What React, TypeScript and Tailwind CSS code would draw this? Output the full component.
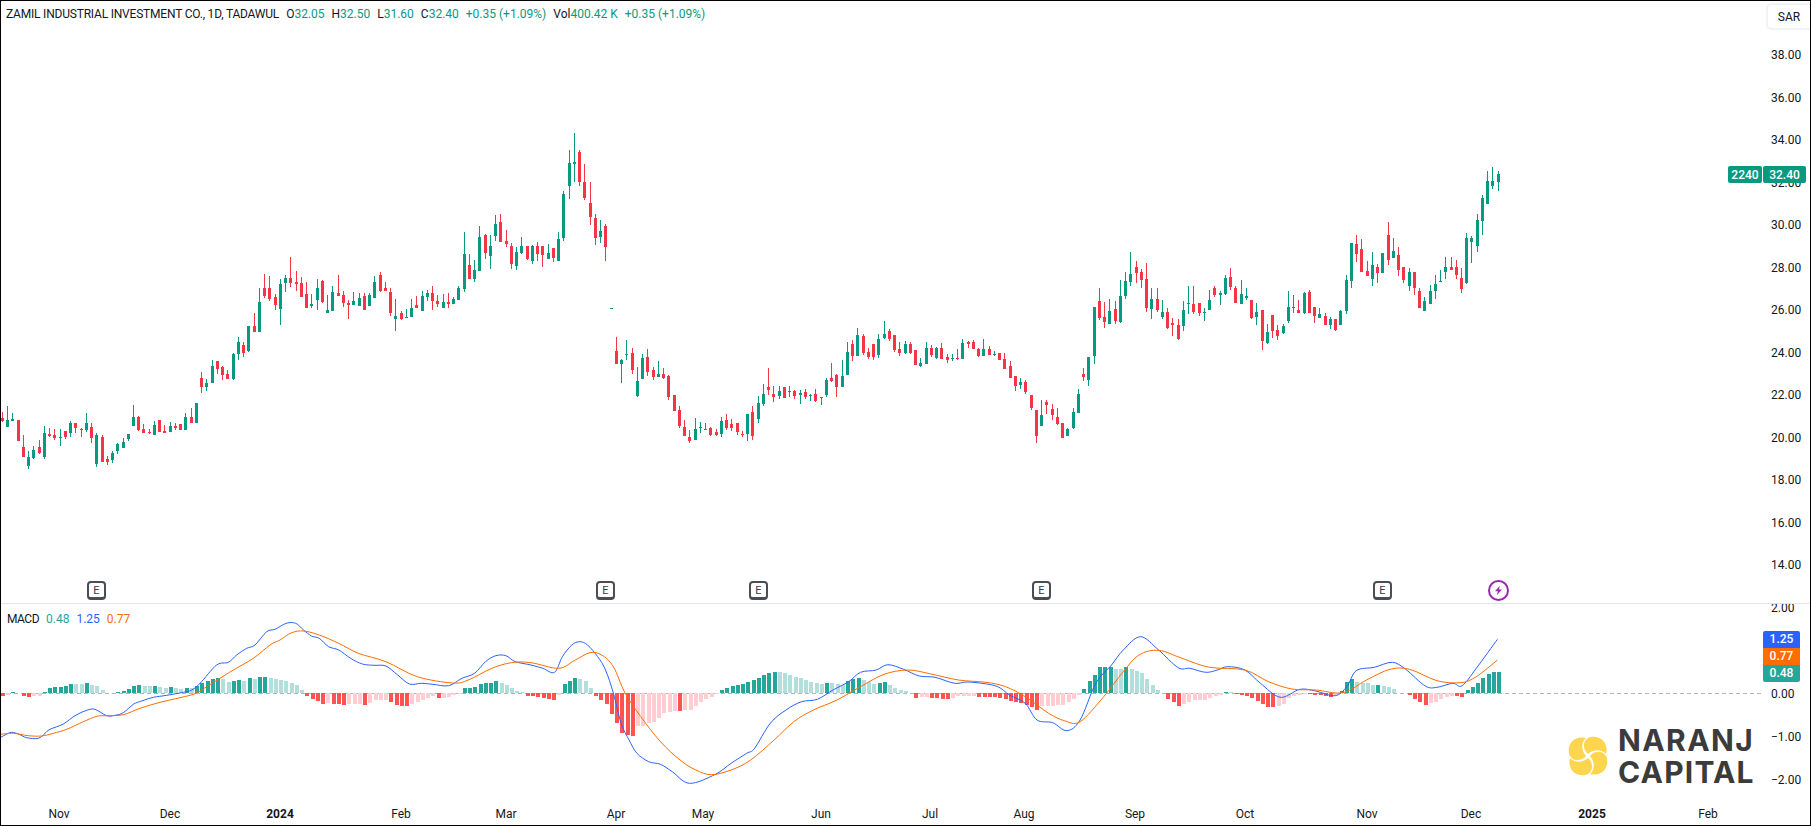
// TradingView style chart snapshot: candles + MACD pane
type Candle = { up: boolean; x: number; hi: number; top: number; bot: number; lo: number };

// each row was read off at 3x: colour+x,high,bodyTop,bodyBottom,low
function parseSeg(bx: number, by: number, rows: string): Candle[] {
  return rows.trim().split(/\s+/).map((r) => {
    const [x, hi, top, bot, lo] = r.slice(1).split(",").map(Number);
    const p = (v: number) => by + Math.round(v / 3);
    return { up: r[0] === "g", x: bx + Math.floor(x / 3), hi: p(hi), top: p(top), bot: p(bot), lo: p(lo) };
  });
}

const candles: Candle[] = [
  ...parseSeg(0, 380, `r7,96,114,123,126 g22,78,120,141,141 g37,99,117,123,123 r55,120,120,183,183 r70,165,201,231,231
    g85,213,231,258,267 g100,198,210,234,237 r118,180,201,219,222 g133,138,159,231,237 r148,144,162,168,171
    r163,147,165,174,180 g181,147,171,174,198 r196,153,153,171,177 g211,123,129,159,171 r226,129,129,144,159
    r244,144,147,150,171 g259,99,129,150,156 r274,129,141,174,189 g289,159,165,252,261 r307,165,171,246,246
    r322,228,237,246,255 g337,213,219,240,249 g352,189,192,213,222 g370,174,186,204,204 g385,162,162,177,183
    g400,75,111,138,138 r415,108,111,150,153 r430,132,147,159,159 r448,147,156,159,162 g463,123,135,165,165
    r478,120,120,156,156 r493,135,153,159,159 g511,126,138,156,156 r526,129,138,144,150 r541,132,132,150,150
    g556,99,111,150,150 r574,84,111,129,129 g589,69,69,129,129`),
  ...parseSeg(190, 250, `r34,366,384,411,429 g49,387,399,411,423 g67,330,348,399,399 r82,333,333,357,372 r97,348,351,375,390
    r112,360,372,387,387 g130,309,312,387,390 g145,261,276,312,330 r160,276,285,309,321 g175,228,228,303,306
    r193,189,228,246,246 g208,114,156,246,246 r223,72,114,138,144 r238,78,114,147,153 r256,132,141,165,180
    g271,87,102,177,225 g286,75,84,99,126 r301,21,84,99,111 r319,63,96,102,123 r334,81,99,141,141 r349,96,132,174,174`),
  ...parseSeg(300, 200, `g34,282,312,318,324 g52,237,264,300,330 r67,240,243,306,309 g82,285,330,339,339 g97,258,276,333,333
    r115,225,279,288,288 r130,273,285,309,321 r145,300,309,315,357 g160,276,303,315,315 g178,279,294,318,318
    r193,279,288,330,330 g208,279,285,318,318 g223,228,246,294,294 r241,216,225,273,276 r256,246,264,273,273
    r271,264,276,339,348 g286,297,348,357,393 r304,333,339,357,360 g319,327,351,354,354 g334,297,324,351,351
    r349,288,315,324,324 g367,273,288,333,333 g382,270,279,291,303 r397,258,279,303,330 r412,285,303,312,321
    g430,282,306,324,324 r445,279,306,312,324 g460,291,297,312,312 g475,258,264,300,300 g493,96,162,267,276
    r508,162,195,237,237 g523,180,210,237,246 g538,78,111,213,213 r556,102,105,159,177 g571,105,138,168,207
    g586,45,72,108,123 r601,42,66,126,126 r619,90,123,132,141 r634,129,138,192,207 g649,141,156,198,210
    g664,111,138,159,162 r682,138,138,177,180 g697,135,138,183,192 r712,126,138,162,183 r727,138,138,165,201
    g745,132,159,177,177 r760,144,144,174,186 g775,96,117,183,183`),
  ...parseSeg(540, 120, `g70,213,222,354,363 g88,90,129,198,237 g103,39,126,132,186 r118,90,96,186,198 r133,132,186,234,240
    r151,186,249,291,315 r166,282,294,354,375 g181,300,333,351,369 r196,312,318,381,423`),
  // lone print inside the gap
  ...parseSeg(300, 200, `g934,325,324,327,327`),
  ...parseSeg(600, 310, `r49,81,123,162,162 g64,147,150,162,219 g79,90,132,135,150 r97,114,129,180,192 g112,171,213,258,261
    g127,132,144,207,207 r142,117,141,186,198 r160,171,180,201,210 g175,153,192,201,201 r190,174,192,204,207
    r205,195,198,261,270 r223,255,255,303,303 r238,288,300,348,354 r253,330,351,378,378 r268,360,381,393,399
    g286,324,357,390,390 g301,336,351,354,369 g316,339,358,360,360 r331,351,354,375,378 r349,357,366,375,378
    g364,321,333,372,381 r379,312,330,354,360 r394,327,342,354,363 r412,339,339,366,375 r427,363,372,375,381
    g442,312,312,372,393 r457,288,306,378,390 g475,258,279,327,339 g490,222,252,282,288 r505,174,231,240,255
    r520,228,252,261,276 g538,228,243,258,267 r553,231,231,264,264 g568,228,243,246,261 r583,240,243,258,267
    g601,240,249,255,282 r616,237,246,261,267 g631,252,255,258,273 r646,237,252,273,276 r664,261,261,264,285
    g679,204,210,255,261 r694,159,204,213,216 r709,192,195,231,261 g727,150,198,231,231 g742,96,126,195,195
    r757,90,102,138,153 g772,54,75,138,138 r790,72,78,129,135 r805,114,126,141,147 r820,102,102,141,150
    g835,72,87,135,144 g853,33,72,84,87 r868,57,63,87,93 r883,75,75,120,126 r898,96,117,129,138
    g916,93,102,129,132 r931,96,102,129,132 r946,120,120,165,165 g961,144,159,168,171`),
  ...parseSeg(920, 240, `g19,306,324,372,372 r34,315,324,345,351 g49,321,324,354,357 r64,309,324,357,357 r82,342,351,360,369
    g97,342,354,357,363 r112,327,354,357,360 g127,297,309,357,357 r145,303,306,312,324 r160,300,306,327,327
    r175,324,327,348,351 g190,297,327,348,348 r208,318,327,345,345 g223,333,342,345,348 r238,339,339,360,360
    r253,339,357,387,387 r271,363,378,414,414 r286,408,408,438,453 g301,414,426,435,447 r316,420,426,456,462
    r334,465,465,504,510 r349,510,510,588,609 g364,480,525,558,558 r379,480,486,495,522 r397,492,507,525,540
    r412,504,531,552,555 r427,549,549,594,594 g442,564,567,588,588 g460,504,516,564,567 g475,447,462,519,519
    r490,384,402,411,423 g505,351,351,420,438 g523,201,201,348,372 r538,144,183,234,240 r553,186,231,246,264
    g568,177,213,252,252 r586,183,207,243,252 g601,120,168,246,249 g616,96,123,168,177 g631,36,102,126,138
    r649,63,81,99,129 r664,87,96,120,144 r679,69,117,204,216 g694,144,177,207,237 r712,144,177,210,216
    g727,180,216,231,237 r742,204,216,264,267 r757,234,249,255,288 r775,237,255,297,300 g790,183,210,258,273
    g805,138,189,192,222 r820,138,192,216,222 r838,189,189,219,228 g853,204,216,219,243 g868,150,180,210,210
    r883,138,144,165,171 g901,153,159,165,195 g916,105,114,162,165 r931,84,111,141,150 r946,138,144,189,189`),
  ...parseSeg(1220, 150, `g64,390,432,462,462 g79,414,438,444,450 r94,450,450,504,507 g109,459,486,501,525 r127,480,480,573,600
    g142,522,546,579,582 r157,495,495,543,564 r172,525,540,558,570 g190,522,528,549,552 g205,423,471,513,519
    g220,435,471,474,489 r235,450,480,489,489 g253,426,429,489,492 r268,420,426,489,489 r283,471,471,498,519
    g298,474,492,504,504 r316,489,498,525,525 g331,501,507,525,537 r346,507,507,540,543 g361,480,483,525,525
    g379,375,390,483,492 g394,279,279,393,414 r409,255,282,312,336 r424,267,297,366,366 r442,333,363,378,378
    g457,306,345,387,408 r472,342,351,369,399 g487,309,309,369,369 r505,216,255,330,345 g520,264,303,324,324
    r535,291,315,360,378 r550,351,351,390,399 g568,354,366,408,423 r583,366,366,414,435 r598,414,423,474,474
    g613,441,453,483,483 g631,405,423,462,462 g646,375,402,423,447 g661,360,393,396,396 g676,321,351,366,387
    r694,321,351,360,360 r709,330,351,375,387 r724,354,384,417,429 g739,249,264,399,402 g754,258,264,276,339
    g772,192,210,288,306 g787,135,144,213,255 g802,63,93,162,162 g817,51,93,108,117 g835,63,72,96,123`),
];

// histogram heights in px above the zero line, one per bar
const hist = [
  -3, -2, 1.5, -0.3, -3, -4, -3, -2.5, 1.5, 5,
  6, 6.5, 6.6, 9.5, 9.4, 9.3, 10.5, 8, 7, 3.5,
  0.3, 0.3, 1.5, 2.5, 4.5, 7.5, 7.6, 7.5, 7, 7.5,
  6.5, 5.5, 5.6, 5, 4.5, 5.5, 5.4, 7.5, 10, 12.5,
  14.5, 15, 14, 11.5, 12.5, 13.5, 12, 15, 14, 16,
  16.5, 15.5, 14, 13.5, 12.5, 10, 8.5, 3, -3, -6,
  -8, -10.5, -10, -10.5, -11, -11.5, -11.4, -11, -10.9, -11.5,
  -10, -7, -7, -7, -9, -11.5, -13, -13.1, -11, -9,
  -7, -5, -3, -5, -4.5, -4, -2, -0.5, 5, 5.2,
  6.5, 9.5, 9.6, 10.5, 12.5, 10.5, 8.5, 5, 2, 1,
  -3, -3.1, -4, -5, -5.5, -6.5, -2, 9, 12, 15.5,
  14, 12, 5.5, -3, -7, -11, -21, -30, -40, -42,
  -42.5, -33, -32.5, -30, -29, -24.5, -20, -19, -18, -18.2,
  -17, -16.5, -13, -9, -6, -3.5, -1, 3.5, 5, 7,
  8.5, 8.6, 11, 13, 15, 18, 20.5, 21, 20.9, 20,
  18, 16.5, 15, 13.5, 11.5, 10, 9.5, 10.5, 10, 9.5,
  8.5, 12.5, 14, 15.5, 13, 11, 9.5, 10, 11, 8.5,
  5, 3.5, 2.5, 0.3, -5, -4, -4, -4.5, -4.6, -5.5,
  -5.6, -5, -3, -3, -3, -3, -3.5, -4, -4.1, -4.2,
  -5, -6, -7.5, -9, -10, -12, -14, -17, -13, -13,
  -12.5, -12.4, -12, -9, -5.5, -2, 4.5, 12, 18, 26,
  26.1, 26.2, 24, 23.9, 26, 24, 22, 20, 14, 8,
  3.5, 0, -6, -9, -13, -11, -8.5, -7, -6.9, -6.8,
  -5, -3, -1.5, 1.5, 1, -1, -2, -3, -5, -8,
  -11, -13.5, -13.6, -13, -11, -5, -3, -1.5, -0.5, -1,
  -1.5, -1.6, -3, -4, -2, 2, 11, 14.5, 11, 10.5,
  10, 8, 8.5, 7, 6.5, 4.5, 0.2, 0, -2, -6,
  -9, -11.5, -10, -9, -6, -4, -2.5, -2.6, -3.5, 3,
  6, 10, 15, 19, 21, 21,
];

const zero = 693;

function histColor(i: number) {
  const h = hist[i];
  const prev = i > 0 ? hist[i - 1] : 0;
  if (h >= 0) return h >= prev ? "#26a69a" : "#b2dfdb";
  return h < prev ? "#ff5252" : "#ffcdd2";
}

const z4 = (pts: number[][]) => pts.map(([x, y]) => [x / 3, 570 + y / 3]);
const z12 = (pts: number[][]) => pts.map(([x, y]) => [280 + x / 1.2748, 590 + y / 3]);

// catmull-rom through the read points, the real lines have no corners
function smoothPath(pts: number[][]) {
  const f = (n: number) => n.toFixed(1);
  let d = `M${f(pts[0][0])} ${f(pts[0][1])}`;
  for (let i = 0; i < pts.length - 1; i++) {
    const p0 = pts[Math.max(i - 1, 0)];
    const p1 = pts[i];
    const p2 = pts[i + 1];
    const p3 = pts[Math.min(i + 2, pts.length - 1)];
    d += ` C${f(p1[0] + (p2[0] - p0[0]) / 6)} ${f(p1[1] + (p2[1] - p0[1]) / 6)} ${f(p2[0] - (p3[0] - p1[0]) / 6)} ${f(p2[1] - (p3[1] - p1[1]) / 6)} ${f(p2[0])} ${f(p2[1])}`;
  }
  return d;
}

const bluePath = smoothPath([
  ...z4([[0,503],[15,495],[35,487],[55,492],[80,503],[115,505],[135,490],[150,478],[190,462],[225,437],[260,421],[285,418],[320,437],[345,436],[370,428],[400,403],[425,393],[460,382],[500,376],[550,367],[575,360],[600,340],[650,285],[685,277],[710,255],[740,235],[765,225],[800,185],[825,178]]),
  ...z12([[8,100],[20,100],[30,120],[40,138],[50,145],[62,170],[75,180],[90,205],[105,222],[120,226],[135,228],[150,255],[165,282],[180,280],[195,283],[215,287],[232,265],[248,250],[262,215],[275,197],[288,197],[300,215],[320,225],[335,235],[350,247],[360,200],[372,165],[382,155],[392,165],[405,200],[415,240],[425,310],[435,400],[445,450],[455,490],[470,515],[485,523],[500,545],[522,580],[555,553],[575,520],[595,490],[605,475],[625,400],[645,360],[665,335],[685,328],[705,300],[725,275],[740,247],[760,240],[775,224],[795,238],[815,258],[835,262],[860,280],[875,276],[895,280],[915,290],[930,315],[950,340],[965,390],[985,398],[1003,422],[1020,390],[1040,280],[1060,225],[1075,180],[1097,140],[1120,180],[1145,233],[1160,235],[1180,247],[1195,240],[1208,230],[1230,240],[1250,280],[1275,322],[1300,298],[1320,303],[1345,317],[1360,290],[1372,242],[1395,232],[1418,217],[1435,238],[1460,288],[1475,292],[1495,280],[1507,287],[1525,235],[1552,148]]),
]);

const orangePath = smoothPath([
  ...z4([[0,493],[40,490],[85,497],[125,498],[160,490],[200,478],[250,455],[290,439],[320,437],[370,434],[420,415],[480,397],[540,383],[585,371],[620,350],[660,325],[700,300],[760,265],[810,225]]),
  ...z12([[0,150],[15,128],[30,123],[50,135],[75,160],[100,190],[135,215],[175,260],[220,279],[240,270],[270,235],[295,218],[320,218],[355,235],[375,212],[395,188],[410,195],[425,230],[440,310],[460,380],[485,455],[510,510],[530,540],[550,554],[575,540],[600,510],[630,450],[655,395],[680,360],[710,330],[740,290],[770,253],[800,240],[830,252],[865,270],[900,277],[925,290],[950,320],[980,370],[1000,392],[1020,395],[1050,320],[1075,245],[1095,195],[1120,181],[1150,205],[1185,232],[1230,240],[1260,275],[1290,297],[1320,300],[1355,308],[1385,270],[1415,238],[1440,238],[1475,272],[1505,278],[1525,260],[1552,210]]),
]);

const priceTicks = ["38.00", "36.00", "34.00", "32.00", "30.00", "28.00", "26.00", "24.00", "22.00", "20.00", "18.00", "16.00", "14.00"];
// the 1.00 row sits behind the value tags, so it stays empty
const macdTicks = ["2.00", "", "0.00", "−1.00", "−2.00"];
const earnings = [96, 605, 758, 1041, 1382];
const timeTicks: { label: string; x: number; bold?: boolean }[] = [
  { label: "Nov", x: 59 },
  { label: "Dec", x: 170 },
  { label: "2024", x: 280, bold: true },
  { label: "Feb", x: 401 },
  { label: "Mar", x: 506 },
  { label: "Apr", x: 616 },
  { label: "May", x: 703 },
  { label: "Jun", x: 821 },
  { label: "Jul", x: 930 },
  { label: "Aug", x: 1024 },
  { label: "Sep", x: 1135 },
  { label: "Oct", x: 1245 },
  { label: "Nov", x: 1367 },
  { label: "Dec", x: 1471 },
  { label: "2025", x: 1592, bold: true },
  { label: "Feb", x: 1708 },
];

function Legend() {
  const g = "text-[#089981]";
  return (
    <div className="absolute left-[5px] top-[5px] flex h-4 items-center text-[12px] leading-4 text-[#131722] whitespace-nowrap">
      <span className="tracking-[-0.2px]">ZAMIL INDUSTRIAL INVESTMENT CO., 1D, TADAWUL</span>
      <span className="ml-[7px]">O<span className={g}>32.05</span></span>
      <span className="ml-[7px]">H<span className={g}>32.50</span></span>
      <span className="ml-[7px]">L<span className={g}>31.60</span></span>
      <span className="ml-[7px]">C<span className={g}>32.40</span></span>
      <span className={`ml-[7px] ${g}`}>+0.35 (+1.09%)</span>
      <span className="ml-[7px]">Vol<span className={g}>400.42 K</span></span>
      <span className={`ml-[7px] ${g}`}>+0.35 (+1.09%)</span>
    </div>
  );
}

function NaranjLogo() {
  const petal = "M20 18 C15 14 14 6 20 2 C26 -1 37 1 38.5 12 C38.8 15 38.3 17 38 18 C33 13 26 13 20 18 Z";
  return (
    <div className="absolute left-[1567px] top-[120px] flex items-center gap-[10px]">
      <svg width="40" height="40" viewBox="0 0 40 40">
        {[0, 90, 180, 270].map((a) => (
          <path key={a} d={petal} fill="#fdd54f" transform={`rotate(${a} 20 20)`} />
        ))}
      </svg>
      <div className="flex flex-col text-[#3b3b3b] font-['Inter',sans-serif] font-bold text-[30px] leading-[32px]">
        <span className="tracking-[1.4px]">NARANJ</span>
        <span className="tracking-[1.2px]">CAPITAL</span>
      </div>
    </div>
  );
}

export default function App() {
  return (
    <div className="w-[1811px] h-[826px] box-border border border-black bg-white flex flex-col overflow-hidden font-['Roboto',sans-serif] text-[#131722]">
      {/* price pane */}
      <div className="relative h-[602px] flex shrink-0 overflow-hidden">
        <svg width="1762" height="602" className="shrink-0" shapeRendering="crispEdges">
          <g transform="translate(-1,-1)">
            {candles.map((c, i) => (
              <g key={i} fill={c.up ? "#089981" : "#f23645"}>
                <rect x={c.x} y={c.hi} width={1} height={Math.max(c.lo - c.hi, 1)} />
                <rect x={c.x - 1} y={c.top} width={3} height={Math.max(c.bot - c.top, 1)} />
              </g>
            ))}
          </g>
        </svg>
        <div className="flex flex-col w-[47px] pl-2 pt-[33px] text-[12px]">
          {priceTicks.map((t) => (
            <div key={t} className="h-[42.5px] shrink-0 flex items-center">{t}</div>
          ))}
        </div>

        <Legend />

        <div className="absolute left-[1765px] top-[2px] w-[44px] h-[27px] flex items-center justify-center bg-white border-2 border-r-0 border-[#f0f3fa] rounded-l-[5px] text-[12px]">SAR</div>

        <div className="absolute left-[1727px] top-[165px] flex gap-px text-[12px] font-medium text-white">
          <span className="h-[17px] w-[34px] bg-[#089981] rounded-[2px] flex items-center justify-center">2240</span>
          <span className="h-[17px] w-[43px] bg-[#089981] rounded-[2px] flex items-center justify-center">32.40</span>
        </div>

        {earnings.map((x) => (
          <div
            key={x}
            className="absolute top-[580px] w-[19px] h-[19px] box-border border-2 border-b-[3px] border-[#4a4d55] rounded-[4px] bg-white flex items-center justify-center text-[11px] leading-none text-[#3a3d45]"
            style={{ left: x - 10 }}
          >
            E
          </div>
        ))}
        <div className="absolute left-[1487px] top-[579px] w-[21px] h-[21px] box-border border-2 border-[#9c27b0] rounded-full flex items-center justify-center">
          <svg width="11" height="11" viewBox="0 0 11 11">
            <path d="M6.8 0.8 L2 6.2 H5 L3.8 10.2 L9 4.6 H6 Z" fill="#9c27b0" />
          </svg>
        </div>
      </div>

      <div className="h-px shrink-0 bg-[#e0e3eb]" />

      {/* macd pane */}
      <div className="relative h-[186px] flex shrink-0 overflow-hidden">
        <svg width="1762" height="186" className="shrink-0">
          <g transform="translate(-1,-604)">
            <line x1="0" x2="1763" y1={zero + 0.5} y2={zero + 0.5} stroke="#b2b5be" strokeDasharray="4 3" />
            <g shapeRendering="crispEdges">
              {hist.map((h, i) => {
                const x = Math.floor(2.33 + 5.25 * i) - 1;
                return (
                  <rect
                    key={i}
                    x={x}
                    y={h >= 0 ? zero - h : zero}
                    width={4}
                    height={Math.abs(h)}
                    fill={histColor(i)}
                  />
                );
              })}
            </g>
            <path d={bluePath} fill="none" stroke="#2962ff" strokeWidth={1} />
            <path d={orangePath} fill="none" stroke="#ff6d00" strokeWidth={1} />
          </g>
        </svg>
        <div className="flex flex-col w-[47px] pl-2 -mt-[18px] text-[12px]">
          {macdTicks.map((t, i) => (
            <div key={i} className="h-[43px] shrink-0 flex items-center">{t}</div>
          ))}
        </div>

        <div className="absolute left-[6px] top-[7px] flex gap-[7px] text-[12px] leading-4">
          <span className="text-[#131722] tracking-[-0.5px]">MACD</span>
          <span className="text-[#26a69a]">0.48</span>
          <span className="text-[#2962ff]">1.25</span>
          <span className="text-[#ff6d00]">0.77</span>
        </div>

        <div className="absolute left-[1762px] top-[27px] w-[37px] flex flex-col text-[12px] font-medium text-white text-center leading-[17px]">
          <span className="bg-[#2962ff] rounded-t-[2px]">1.25</span>
          <span className="bg-[#ff6d00]">0.77</span>
          <span className="bg-[#26a69a] rounded-b-[2px]">0.48</span>
        </div>

        <NaranjLogo />
      </div>

      {/* time axis */}
      <div className="relative flex-1 text-[12px]">
        {timeTicks.map((t) => (
          <span
            key={t.label + t.x}
            className={`absolute top-[16px] -translate-x-1/2 leading-4 ${t.bold ? "font-bold" : ""}`}
            style={{ left: t.x - 1 }}
          >
            {t.label}
          </span>
        ))}
      </div>
    </div>
  );
}
